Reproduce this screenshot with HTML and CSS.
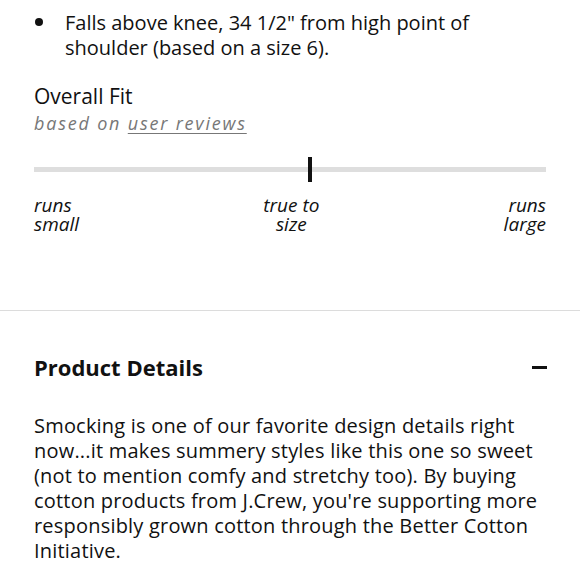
FILE: index.html
```html
<!DOCTYPE html>
<html>
<head>
<meta charset="utf-8">
<link rel="stylesheet" href="styles.css">
</head>
<body>
<div class="page">
  <section class="fit-section">
    <div class="bullet-row">
      <span class="bullet"></span>
      <p class="bullet-text">Falls above knee, 34 1/2" from high point of shoulder (based on a size 6).</p>
    </div>
    <h3 class="fit-title">Overall Fit</h3>
    <p class="fit-sub">based on <span class="link">user reviews</span></p>
    <div class="track">
      <span class="marker"></span>
    </div>
    <div class="fit-labels">
      <span class="lbl lbl-left">runs<br>small</span>
      <span class="lbl lbl-mid">true to<br>size</span>
      <span class="lbl lbl-right">runs<br>large</span>
    </div>
  </section>
  <section class="details">
    <div class="details-head">
      <h2 class="details-title">Product Details</h2>
      <span class="minus"></span>
    </div>
    <p class="details-text">Smocking is one of our favorite design details right now...it makes summery styles like this one so sweet (not to mention comfy and stretchy too). By buying cotton products from J.Crew, you're supporting more responsibly grown cotton through the Better Cotton Initiative.</p>
  </section>
</div>
</body>
</html>
```
FILE: styles.css
```css
html, body {
  margin: 0;
  padding: 0;
  background: #fff;
}
body {
  font-family: "Open Sans", "Noto Sans", sans-serif;
  color: #111;
}
.page {
  width: 580px;
}
.fit-section {
  padding: 10px 34px 0 34px;
  height: 311px;
  box-sizing: border-box;
  border-bottom: 1px solid #dcdcdc;
}
.bullet-row {
  display: flex;
  align-items: flex-start;
}
.bullet {
  width: 8px;
  height: 8px;
  border-radius: 50%;
  background: #111;
  margin: 8px 22px 0 1px;
  flex: none;
}
.bullet-text {
  margin: 0;
  font-size: 20px;
  line-height: 25px;
  width: 460px;
}
.fit-title {
  margin: 23px 0 0 0;
  font-weight: 400;
  font-size: 21px;
  line-height: 26px;
}
.fit-sub {
  margin: 2px 0 0 0;
  font-style: italic;
  font-size: 18px;
  line-height: 24px;
  color: #777;
  letter-spacing: 1.8px;
}
.link {
  text-decoration: underline;
  text-underline-offset: 3px;
}
.track {
  position: relative;
  margin-top: 32px;
  height: 5px;
  background: #dedede;
}
.marker {
  position: absolute;
  left: 274px;
  top: -10px;
  width: 4px;
  height: 25px;
  background: #111;
}
.fit-labels {
  display: flex;
  justify-content: space-between;
  margin-top: 24px;
  font-style: italic;
  font-size: 19px;
  line-height: 19px;
}
.lbl-mid {
  text-align: center;
}
.lbl-right {
  text-align: right;
}
.details {
  padding: 41px 34px 0 34px;
}
.details-head {
  display: flex;
  align-items: center;
  justify-content: space-between;
}
.details-title {
  margin: 0;
  font-size: 22px;
  font-weight: 700;
  line-height: 30px;
}
.minus {
  width: 15px;
  height: 3px;
  background: #111;
  margin-right: -1px;
}
.details-text {
  margin: 31px 0 0 0;
  font-size: 20px;
  line-height: 25px;
  letter-spacing: 0.2px;
}
```
